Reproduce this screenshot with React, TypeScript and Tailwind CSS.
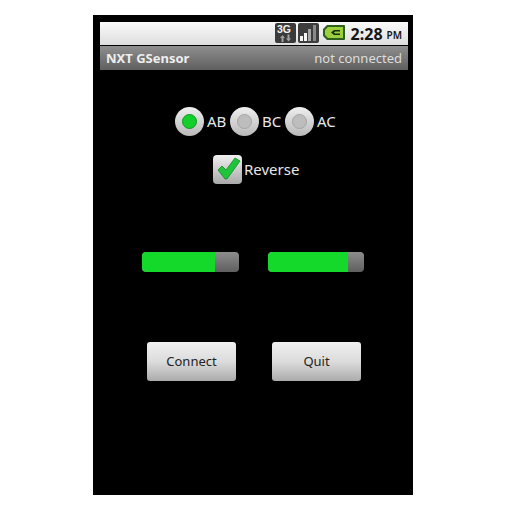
import React from "react";

const font = { fontFamily: '"Noto Sans", "Open Sans", sans-serif' };

function Radio({ label, checked }: { label: string; checked?: boolean }) {
  return (
    <div className="flex items-center w-[55px]">
      <div className="w-[29px] h-[29px] rounded-full bg-gradient-to-b from-[#efefef] to-[#b9b9b9] flex items-center justify-center shrink-0">
        {checked ? (
          <div className="w-[15px] h-[15px] rounded-full bg-[#12cf2a] border border-[#0c9a20]" />
        ) : (
          <div className="w-[15px] h-[15px] rounded-full bg-[#bdbdbd] border border-[#a5a5a5]" />
        )}
      </div>
      <span className="text-[15px] text-[#e8e8e8] ml-[3px] leading-none">{label}</span>
    </div>
  );
}

function Bar({ width, fill }: { width: string; fill: string }) {
  return (
    <div className={`${width} h-[20px] rounded-[4px] bg-gradient-to-b from-[#8d8d8d] to-[#5f5f5f] overflow-hidden`}>
      <div className={`${fill} h-full bg-[#14d92b] rounded-l-[3px]`} />
    </div>
  );
}

function Btn({ label }: { label: string }) {
  return (
    <div className="w-[89px] h-[39px] rounded-[3px] bg-gradient-to-b from-[#f0f0f0] via-[#dcdcdc] to-[#ababab] flex items-center justify-center text-[13px] text-[#222]">
      {label}
    </div>
  );
}

export default function App() {
  return (
    <div className="w-[512px] h-[512px] bg-white pt-[15px] pl-[93px]" style={font}>
      <div className="w-[320px] h-[480px] bg-black flex flex-col pt-[7px] pl-[7px] pr-[5px]">
        {/* status bar */}
        <div className="h-[23px] bg-gradient-to-b from-[#fafafa] to-[#dedede] flex items-center justify-end pr-[6px] shrink-0">
          <svg width="70" height="21" viewBox="0 0 70 21" className="mr-[6px]">
            <rect x="0" y="0" width="21" height="20" rx="2" fill="#3a3a3a" />
            <text x="2" y="10" fontSize="10.500" fontWeight="700" fill="#f2f2f2" fontFamily="Liberation Sans">3G</text>
            <path d="M5 15l2.500-3 2.500 3H8.500v4h-2v-4zM11 15.500h1.500v-4h2v4H16l-2.500 3z" fill="#a0a0a0" />
            <rect x="23" y="0" width="21" height="20" rx="2" fill="#3d3d3d" />
            <rect x="25" y="13" width="3" height="5" fill="#f5f5f5" />
            <rect x="29" y="10" width="3" height="8" fill="#f5f5f5" />
            <rect x="33" y="6" width="3" height="12" fill="#a8a8a8" />
            <rect x="38" y="2" width="3" height="16" fill="#8a8a8a" />
            <path d="M48 6l4-4h17a1 1 0 0 1 1 1v13a1 1 0 0 1-1 1H52l-4-4z" fill="#2f5f1c" />
            <path d="M50 7l3-3h15v11H53l-3-3z" fill="#9ccf3e" />
            <path d="M65 7h-6l-3 2.500 3 2.500h6v-1.500h-5l-1-1 1-1h5z" fill="#15300c" />
          </svg>
          <span className="text-[16px] font-bold text-[#151515] leading-none">2:28</span>
          <span className="text-[10px] font-semibold text-[#151515] ml-[4px] leading-none mt-[3px]">PM</span>
        </div>
        {/* title bar */}
        <div className="h-[24px] mt-[1px] bg-gradient-to-b from-[#8f8f8f] to-[#5f5f5f] flex items-center justify-between px-[6px] shrink-0">
          <span className="text-[13px] font-bold text-[#eeeeee] leading-none">NXT GSensor</span>
          <span className="text-[13px] text-[#dddddd] leading-none">not connected</span>
        </div>
        {/* body */}
        <div className="flex flex-col">
          <div className="flex mt-[37px] ml-[75px]">
            <Radio label="AB" checked />
            <Radio label="BC" />
            <Radio label="AC" />
          </div>
          <div className="flex items-center mt-[19px] ml-[113px]">
            <div className="relative w-[29px] h-[29px] rounded-[4px] bg-gradient-to-b from-[#f0f0f0] to-[#a9a9a9]">
              <svg width="29" height="29" viewBox="0 0 29 29" className="absolute inset-0">
                <path d="M5 15l4-4 4 4 9-12 5 3-13 18h-2z" fill="#1fc43a" stroke="#128a26" strokeWidth="0.800" />
              </svg>
            </div>
            <span className="text-[15px] text-[#e8e8e8] ml-[2px] leading-none">Reverse</span>
          </div>
          <div className="flex mt-[68px] ml-[42px] gap-[29px]">
            <Bar width="w-[97px]" fill="w-[73px]" />
            <Bar width="w-[96px]" fill="w-[80px]" />
          </div>
          <div className="flex mt-[70px] ml-[47px] gap-[36px]">
            <Btn label="Connect" />
            <Btn label="Quit" />
          </div>
        </div>
      </div>
    </div>
  );
}
